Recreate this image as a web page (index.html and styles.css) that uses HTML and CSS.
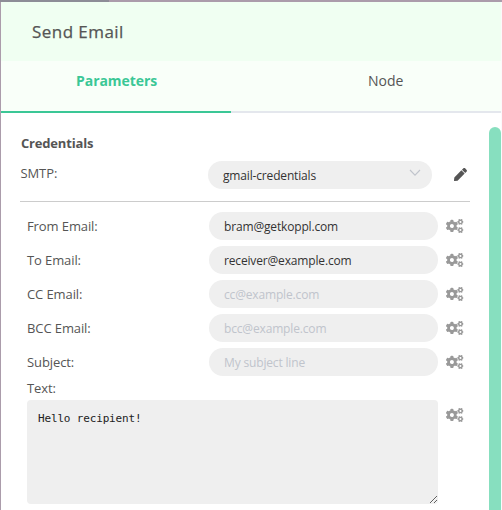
FILE: index.html
```html
<!DOCTYPE html>
<html lang="en">
<head>
<meta charset="utf-8">
<title>Send Email</title>
<link rel="stylesheet" href="styles.css">
</head>
<body>
<svg class="defs" width="0" height="0" aria-hidden="true">
  <symbol id="cogs" viewBox="0 0 640 512">
    <path id="small-cog" d="M512.1 191l-8.2 14.3c-3 5.3-9.4 7.5-15.1 5.4-11.8-4.4-22.6-10.7-32.1-18.6-4.6-3.8-5.8-10.5-2.8-15.7l8.2-14.3c-6.9-8-12.3-17.3-15.9-27.4h-16.5c-6 0-11.2-4.3-12.2-10.3-2-12-2.1-24.6 0-37.1 1-6 6.2-10.4 12.2-10.4h16.5c3.6-10.1 9-19.4 15.9-27.4l-8.2-14.3c-3-5.2-1.9-11.9 2.8-15.7 9.5-7.9 20.4-14.2 32.1-18.6 5.7-2.1 12.1.1 15.1 5.4l8.2 14.3c10.5-1.9 21.2-1.9 31.7 0L552 6.3c3-5.3 9.4-7.5 15.1-5.4 11.8 4.4 22.6 10.7 32.1 18.6 4.6 3.8 5.8 10.5 2.8 15.7l-8.2 14.3c6.9 8 12.3 17.3 15.9 27.4h16.5c6 0 11.2 4.3 12.2 10.3 2 12 2.1 24.6 0 37.1-1 6-6.2 10.4-12.2 10.4h-16.5c-3.6 10.1-9 19.4-15.9 27.4l8.2 14.3c3 5.2 1.9 11.9-2.8 15.7-9.5 7.9-20.4 14.2-32.1 18.6-5.7 2.1-12.1-.1-15.1-5.4l-8.2-14.3c-10.4 1.9-21.2 1.9-31.7 0zm-10.5-58.8c38.5 29.6 82.4-14.3 52.8-52.8-38.5-29.7-82.4 14.3-52.8 52.8z"/>
    <use href="#small-cog" y="299"/>
    <path d="M386.3 286.1l33.7 16.8c10.1 5.8 14.5 18.1 10.5 29.1-8.9 24.2-26.4 46.4-42.6 65.8-7.4 8.9-20.2 11.1-30.3 5.3l-29.1-16.8c-16 13.7-34.6 24.6-54.9 31.7v33.6c0 11.6-8.3 21.6-19.7 23.6-24.6 4.2-50.4 4.4-75.9 0-11.5-2-20-11.9-20-23.6V418c-20.3-7.2-38.9-18-54.9-31.7L74 403c-10 5.8-22.9 3.6-30.3-5.3-16.2-19.4-33.3-41.6-42.2-65.7-4-10.9.4-23.2 10.5-29.1l33.3-16.8c-3.9-20.9-3.9-42.4 0-63.4L12 205.8c-10.1-5.8-14.6-18.1-10.5-29 8.9-24.2 26-46.4 42.2-65.8 7.4-8.9 20.2-11.1 30.3-5.3l29.1 16.8c16-13.7 34.6-24.6 54.9-31.7V57.1c0-11.5 8.2-21.5 19.6-23.5 24.6-4.2 50.5-4.4 76-.1 11.5 2 20 11.9 20 23.6v33.6c20.3 7.2 38.9 18 54.9 31.7l29.1-16.8c10-5.8 22.9-3.6 30.3 5.3 16.2 19.4 33.2 41.6 42.1 65.8 4 10.9.1 23.2-10 29.1l-33.7 16.8c3.9 21 3.9 42.5 0 63.5zm-117.6 21.1c59.2-77-28.7-164.9-105.7-105.7-59.2 77 28.7 164.9 105.7 105.7z"/>
  </symbol>
</svg>
<div class="panel">
  <header class="title">Send Email</header>
  <nav class="tabs">
    <div class="tab active">Parameters</div>
    <div class="tab">Node</div>
  </nav>
  <main class="content">
    <div class="form">
      <section class="credentials">
        <h2>Credentials</h2>
        <div class="cred-row">
          <span class="label">SMTP:</span>
          <div class="field select">
            <span>gmail-credentials</span>
            <svg width="12" height="8" viewBox="0 0 12 8" fill="none" stroke="#c0c4cc" stroke-width="1.1"><path d="M1 1l5 5.2L11 1"/></svg>
          </div>
          <svg class="pen" width="13" height="13" viewBox="0 0 512 512"><path d="M290.74 93.24l128.02 128.02-277.99 277.99-114.14 12.6C11.35 513.54-1.56 500.62.14 485.34l12.7-114.22 277.9-277.88zm207.2-19.06l-60.11-60.11c-18.75-18.75-49.16-18.75-67.91 0l-56.55 56.55 128.02 128.02 56.55-56.55c18.75-18.76 18.75-49.16 0-67.91z"/></svg>
        </div>
      </section>
      <section class="params">
        <div class="row"><span class="label">From Email:</span><input class="field" value="bram@getkoppl.com"><svg class="cogs"><use href="#cogs"/></svg></div>
        <div class="row"><span class="label">To Email:</span><input class="field" value="receiver@example.com"><svg class="cogs"><use href="#cogs"/></svg></div>
        <div class="row"><span class="label">CC Email:</span><input class="field" placeholder="cc@example.com"><svg class="cogs"><use href="#cogs"/></svg></div>
        <div class="row"><span class="label">BCC Email:</span><input class="field" placeholder="bcc@example.com"><svg class="cogs"><use href="#cogs"/></svg></div>
        <div class="row"><span class="label">Subject:</span><input class="field" placeholder="My subject line"><svg class="cogs"><use href="#cogs"/></svg></div>
        <div class="label text-label">Text:</div>
        <div class="text-row"><textarea spellcheck="false">Hello recipient!</textarea><svg class="cogs"><use href="#cogs"/></svg></div>
      </section>
    </div>
    <div class="scrollbar"></div>
  </main>
</div>
</body>
</html>
```
FILE: styles.css
```css
* { box-sizing: border-box; }
body {
  margin: 0;
  height: 510px;
  overflow: hidden;
  padding: 2px 1px 0 1px;
  background:
    linear-gradient(#8d8d97, #8d8d97) 0 0 / 109px 2px no-repeat,
    linear-gradient(#fdf8fb, #fdf8fb) 501px 2px / 1px 508px no-repeat,
    #ab9cab;
  font-family: "Open Sans", sans-serif;
  color: #555;
}
.defs { position: absolute; }
.panel { height: 508px; background: #fff; display: flex; flex-direction: column; }
.title {
  height: 59px;
  padding-left: 31px;
  background: #f0fff2;
  font-size: 17px;
  font-weight: 500;
  line-height: 59px;
  letter-spacing: .45px;
  -webkit-text-stroke: .25px #555;
  flex: none;
}
.tabs { display: flex; height: 52px; background: #f9fff9; flex: none; }
.tab {
  flex: 1;
  height: 52px;
  border-bottom: 2px solid #e4e7ed;
  padding-left: 137px;
  font-size: 14px;
  line-height: 39px;
}
.tab.active {
  flex: none;
  width: 230px;
  padding-left: 75px;
  border-color: #3bc796;
  color: #3bc796;
  font-weight: 700;
  letter-spacing: -.05px;
}
.content { flex: 1; display: flex; justify-content: space-between; min-height: 0; }
.form { width: 469px; padding: 22px 0 0 19px; }
.credentials { height: 67px; border-bottom: 1px solid #ccc; }
h2 {
  margin: 0;
  height: 26px;
  padding-left: 1px;
  font-size: 13px;
  line-height: 17px;
  font-weight: 700;
  letter-spacing: -.18px;
}
.label { font-size: 13px; line-height: 28px; letter-spacing: -.1px; }
.cred-row { display: flex; height: 28px; line-height: 28px; }
.cred-row .label { width: 188px; line-height: 25px; padding-left: .5px; }
.field {
  width: 229px;
  height: 28px;
  margin: 0;
  padding: 2px 15px 0;
  border: 0;
  border-radius: 14px;
  background: #efefef;
  color: #333;
  font: 12px/28px "Open Sans", sans-serif;
  letter-spacing: -.16px;
  outline: 0;
}
.field::placeholder { color: #c0c4cc; opacity: 1; }
.select { width: 224px; display: flex; justify-content: space-between; padding: 1px 11px 0 15px; }
.select svg { margin-top: 7px; }
.pen { margin: 7px 0 0 22px; fill: #555; }
.params { padding: 10px 0 0 7px; }
.row { display: flex; height: 34px; }
.row .label { width: 182px; }
.cogs { width: 17.5px; height: 14px; margin: 7px 0 0 8px; fill: #999; }
.text-label { height: 18px; line-height: 18px; margin-top: -3px; }
.text-row { display: flex; margin-top: 3px; }
.text-row .cogs { margin-top: 8px; }
textarea {
  width: 411px;
  height: 104px;
  margin: 0;
  padding: 10px 11px 8px;
  border: 0;
  border-radius: 4px;
  background: #efefef;
  color: #222;
  font: 11px/18px "DejaVu Sans Mono", monospace;
  letter-spacing: -.16px;
  resize: both;
  outline: 0;
}
.scrollbar { width: 12px; margin-top: 14px; border-radius: 6px 6px 0 0; background: #87dfbf; }
```
